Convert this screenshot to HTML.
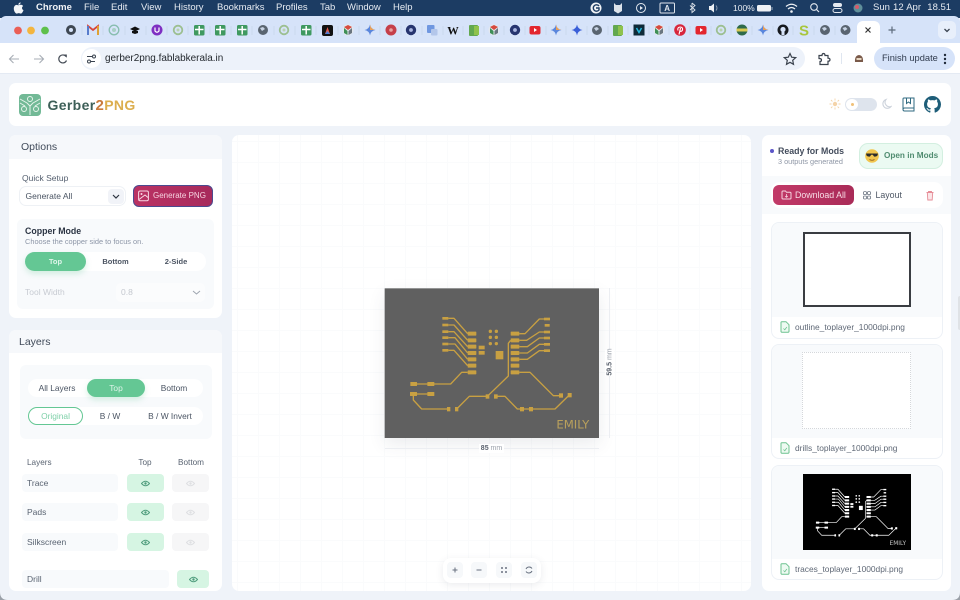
<!DOCTYPE html>
<html><head><meta charset="utf-8"><title>Gerber2PNG</title>
<style>
*{box-sizing:border-box}
html,body{margin:0;padding:0}
body{width:960px;height:600px;overflow:hidden;position:relative;background:#eff3f9;font-family:"Liberation Sans",sans-serif}
.a{position:absolute}
.t{position:absolute;white-space:nowrap;line-height:1}
.m{color:#e6ebf2;font-size:9.5px;top:3px}
.c{transform:translateX(-50%)}
.card{position:absolute;background:#fff;border-radius:7px}
.eye{position:absolute;border-radius:4px;display:flex;align-items:center;justify-content:center}
.lbl{position:absolute;background:#f8fafc;border-radius:4px;font-size:8.5px;color:#5a6472;padding-left:5px;line-height:18px;height:18px}
.fc{position:absolute;left:771px;width:172px;background:#fff;border:1px solid #edf1f6;border-radius:8px;overflow:hidden}
.fi{position:absolute;left:0;top:0;width:100%;height:94px;background:#f8fafc}
.fn{position:absolute;left:23px;font-size:8.4px;color:#5f6876;white-space:nowrap;line-height:1}
</style></head><body>

<!-- menubar -->
<div class="a" style="left:0;top:0;width:960px;height:18px;background:#1c3c63"></div>
<svg class="a" style="left:13px;top:2px" width="11" height="12" viewBox="0 0 11 12"><path d="M7.6 0.4C7.7 1.6 6.6 2.9 5.4 2.8 5.3 1.6 6.4 .5 7.6 .4ZM5.5 3.3C6.1 3.3 6.9 2.7 7.9 2.8 8.9 2.9 9.7 3.3 10.1 4.1 8.5 5 8.7 7.4 10.5 8.1 10 9.4 9 11.6 7.8 11.6 7 11.6 6.7 11.1 5.8 11.1 4.8 11.1 4.5 11.6 3.7 11.6 2.4 11.6.8 8.9.8 6.6.8 4.4 2.2 2.9 3.6 2.9 4.4 2.9 5 3.3 5.5 3.3Z" fill="#f4f6f9"/></svg>
<span class="t m" style="left:36px;font-weight:bold;color:#f2f4f8">Chrome</span>
<span class="t m" style="left:84px">File</span>
<span class="t m" style="left:111px">Edit</span>
<span class="t m" style="left:141px">View</span>
<span class="t m" style="left:174px">History</span>
<span class="t m" style="left:217px">Bookmarks</span>
<span class="t m" style="left:276px">Profiles</span>
<span class="t m" style="left:320px">Tab</span>
<span class="t m" style="left:347px">Window</span>
<span class="t m" style="left:393px">Help</span>

<svg class="a" style="left:590px;top:0" width="290" height="16" viewBox="590 0 290 16">
<circle cx="596" cy="8" r="5.5" fill="#f1f3f6"/><path d="M599 6A3.2 3.2 0 1 0 599 10V8H596" fill="none" stroke="#1c3c63" stroke-width="1.4"/>
<path d="M614 3L616 5H620L622 3V11L618 13.5 614 11Z" fill="#dbe2ea"/>
<circle cx="641" cy="8" r="4.5" fill="none" stroke="#e4e9f0"/><path d="M640 6L643 8 640 10Z" fill="#e4e9f0"/>
<rect x="660" y="3" width="14.5" height="10" rx="1" fill="none" stroke="#dfe5ec"/>
<text x="667.2" y="11" font-size="8" font-weight="bold" text-anchor="middle" fill="#dfe5ec">A</text>
<path d="M692 3L695 5.5 690 10M690 5.5L695 10 692 12.5V3" fill="none" stroke="#dfe5ec" stroke-width=".9"/>
<path d="M709 6H711L714 3.5V12.5L711 10H709Z" fill="#eef1f5"/><path d="M716 5.5Q718 8 716 10.5" fill="none" stroke="#8a9bb0"/>
<rect x="757" y="5" width="14" height="6.5" rx="1.5" fill="#eef1f5"/><rect x="771.5" y="7" width="1" height="3" fill="#9fb0c2"/>
<path d="M786 6.5Q791.5 2 797 6.5M788 9Q791.5 6 795 9" fill="none" stroke="#eef1f5" stroke-width="1.3"/><circle cx="791.5" cy="11.5" r="1.3" fill="#eef1f5"/>
<circle cx="814" cy="7" r="3.3" fill="none" stroke="#e4e9f0" stroke-width="1.1"/><path d="M816.5 9.5L819 12" stroke="#e4e9f0" stroke-width="1.2"/>
<rect x="833" y="3" width="9" height="4" rx="2" fill="#e4e9f0"/><rect x="833" y="8.5" width="9" height="4" rx="2" fill="none" stroke="#e4e9f0"/>
<circle cx="858" cy="8" r="4.5" fill="#5f8f9a"/><circle cx="857" cy="7" r="2" fill="#d75a6a"/>
</svg>
<span class="t" style="left:733px;top:4px;font-size:8.5px;color:#e6ebf2">100%</span>
<span class="t" style="left:873px;top:3px;font-size:9.5px;color:#e6ebf2;word-spacing:.5px">Sun 12 Apr&nbsp; 18.51</span>

<!-- tab bar -->
<div class="a" style="left:0;top:16px;width:960px;height:28px;background:#d6e3f9;border-radius:6px 6px 0 0"></div>
<div class="a" style="left:857px;top:21px;width:23px;height:23px;background:#fff;border-radius:6px 6px 0 0"></div>
<div class="a" style="left:938px;top:21px;width:18px;height:18px;background:#e8effb;border-radius:5px"></div>
<svg class="a" style="left:0;top:16px" width="960" height="28" viewBox="0 16 960 28">
<circle cx="18" cy="30.5" r="3.9" fill="#ea5f56"/><circle cx="31" cy="30.5" r="3.9" fill="#f3b53f"/><circle cx="45" cy="30.5" r="3.9" fill="#5ec04b"/>
<g stroke="#c8d5ea" stroke-width=".8"><path d="M82 26V35M103 26V35M125 26V35M146 26V35M167 26V35M188 26V35M210 26V35M231 26V35M252 26V35M274 26V35M295 26V35M316 26V35M338 26V35M359 26V35M380 26V35M401 26V35M422 26V35M443 26V35M463 26V35M484 26V35M504 26V35M525 26V35M546 26V35M566 26V35M587 26V35M608 26V35M628 26V35M649 26V35M669 26V35M690 26V35M711 26V35M731 26V35M752 26V35M773 26V35M793 26V35M814 26V35M835 26V35"/></g>
<circle cx="71" cy="30" r="5" fill="#3f4853"/><circle cx="71" cy="30" r="2" fill="#d6e3f9"/>
<path d="M88 35V26L93 30 98 26V35" fill="none" stroke="#d8453a" stroke-width="1.8"/><path d="M88 35V26" stroke="#4a7fd8" stroke-width="1.8"/><path d="M98 35V26" stroke="#e0a830" stroke-width="1.8"/>
<circle cx="114" cy="30" r="4.8" fill="none" stroke="#88bdaf" stroke-width="1.3"/><circle cx="114" cy="30" r="2" fill="#a8d0c4"/>
<path d="M130 29L135 26.5 140 29 135 31.5Z" fill="#111"/><path d="M132 31V33L135 34 138 33V31" fill="#111"/>
<circle cx="157" cy="30" r="5.5" fill="#7e2fc2"/><path d="M155 27.5V31Q157 33.5 159 31V27.5" fill="none" stroke="#fff" stroke-width="1.2"/>
<circle cx="178" cy="30" r="4.3" fill="none" stroke="#9cbf90" stroke-width="1.8"/><circle cx="178" cy="30" r="1.5" fill="#b8d2ae"/>
<rect x="194" y="25" width="10.5" height="10.5" rx="1.5" fill="#3f9960"/><path d="M199.2 26V34.5M195 29.5H203.5" stroke="#fff" stroke-width="1.5"/>
<rect x="215" y="25" width="10.5" height="10.5" rx="1.5" fill="#3f9960"/><path d="M220.2 26V34.5M216 29.5H224.5" stroke="#fff" stroke-width="1.5"/>
<rect x="237" y="25" width="10.5" height="10.5" rx="1.5" fill="#3f9960"/><path d="M242.2 26V34.5M238 29.5H246.5" stroke="#fff" stroke-width="1.5"/>
<circle cx="263" cy="30" r="5" fill="#596470"/><path d="M260 28L263 27 265 29 262 31Z" fill="#c7d3e4"/>
<circle cx="284" cy="30" r="4.3" fill="none" stroke="#9cbf90" stroke-width="1.8"/><circle cx="284" cy="30" r="1.5" fill="#b8d2ae"/>
<rect x="301" y="25" width="10.5" height="10.5" rx="1.5" fill="#3f9960"/><path d="M306.2 26V34.5M302 29.5H310.5" stroke="#fff" stroke-width="1.5"/>
<rect x="322" y="25" width="11" height="11" rx="2" fill="#111"/><path d="M325 34L327.5 27 330 34Z" fill="#e0584a"/><path d="M327.5 31L330 34H325Z" fill="#4a7fd8"/>
<circle cx="348" cy="30" r="5.5" fill="#e3e8ee"/><path d="M344 27L348 25 352 27 348 30Z" fill="#d64a3d"/><path d="M344 28V33L347.5 35V31Z" fill="#3f8f57"/><path d="M352 28V33L348.5 35V31Z" fill="#6a7680"/>
<path d="M370 24.5Q370.8 29.2 375.5 30 370.8 30.8 370 35.5 369.2 30.8 364.5 30 369.2 29.2 370 24.5Z" fill="#5a86dc"/><path d="M370 24.5Q370.8 29.2 375.5 30H370Z" fill="#e8a05a"/>
<circle cx="391" cy="30" r="5.5" fill="#c53f4a"/><circle cx="391" cy="30" r="1.8" fill="#e8a0a0"/>
<circle cx="411" cy="30" r="5.2" fill="#27356f"/><circle cx="411" cy="30" r="1.9" fill="#aab6e0"/>
<rect x="427" y="25" width="7.5" height="8" rx="1" fill="#6f97e0"/><rect x="431" y="29" width="6.5" height="6.5" rx="1" fill="#b3c6ea"/>
<rect x="469" y="25" width="9" height="11" rx="1" fill="#62a84f"/><rect x="474" y="26" width="5" height="9" fill="#8fc24c"/>
<text x="453" y="34.5" font-family="Liberation Serif,serif" font-size="11.5" font-weight="bold" text-anchor="middle" fill="#111">W</text>
<circle cx="494" cy="30" r="5.5" fill="#e3e8ee"/><path d="M490 27L494 25 498 27 494 30Z" fill="#d64a3d"/><path d="M490 28V33L493.5 35V31Z" fill="#3f8f57"/><path d="M498 28V33L494.5 35V31Z" fill="#6a7680"/>
<circle cx="515" cy="30" r="5.2" fill="#27356f"/><circle cx="515" cy="30" r="1.9" fill="#aab6e0"/>
<rect x="529.5" y="26" width="11" height="8.5" rx="2" fill="#e3262e"/><path d="M534 28L537 30 534 32Z" fill="#fff"/>
<path d="M556 24.5Q556.8 29.2 561.5 30 556.8 30.8 556 35.5 555.2 30.8 550.5 30 555.2 29.2 556 24.5Z" fill="#5a86dc"/><path d="M556 24.5Q556.8 29.2 561.5 30H556Z" fill="#e8a05a"/>
<path d="M577 24.5Q577.8 29.2 582.5 30 577.8 30.8 577 35.5 576.2 30.8 571.5 30 576.2 29.2 577 24.5Z" fill="#3a5fd8"/>
<circle cx="597" cy="30" r="5" fill="#596470"/><path d="M594 28L597 27 599 29 596 31Z" fill="#c7d3e4"/>
<rect x="613" y="25" width="9" height="11" rx="1" fill="#62a84f"/><rect x="618" y="26" width="5" height="9" fill="#8fc24c"/>
<rect x="633.5" y="24.5" width="11" height="11" fill="#0e2a38"/><path d="M636.5 28L639 32.5 641.5 28" fill="none" stroke="#25b7dc" stroke-width="1.5"/>
<circle cx="659" cy="30" r="5.5" fill="#e3e8ee"/><path d="M655 27L659 25 663 27 659 30Z" fill="#d64a3d"/><path d="M655 28V33L658.5 35V31Z" fill="#3f8f57"/><path d="M663 28V33L659.5 35V31Z" fill="#6a7680"/>
<circle cx="680" cy="30" r="5.8" fill="#d8263c"/><path d="M679 34.5L680.5 28M678 30.5Q677 27.5 680 27 683 27 682.5 30 681.5 32 680 31" fill="none" stroke="#fff" stroke-width="1.1"/>
<rect x="695.5" y="26" width="11" height="8.5" rx="2" fill="#e3262e"/><path d="M700 28L703 30 700 32Z" fill="#fff"/>
<circle cx="721" cy="30" r="4.3" fill="none" stroke="#9cbf90" stroke-width="1.8"/><circle cx="721" cy="30" r="1.5" fill="#b8d2ae"/>
<circle cx="742" cy="30" r="5.5" fill="#2e6a4a"/><rect x="736.5" y="28.5" width="11" height="3" fill="#d8c850"/>
<path d="M763 24.5Q763.8 29.2 768.5 30 763.8 30.8 763 35.5 762.2 30.8 757.5 30 762.2 29.2 763 24.5Z" fill="#5a86dc"/><path d="M763 24.5Q763.8 29.2 768.5 30H763Z" fill="#e8a05a"/>
<circle cx="783" cy="30" r="5.5" fill="#15191e"/><circle cx="783" cy="29.5" r="2.6" fill="#d6e3f9"/><rect x="781.5" y="32" width="3" height="3" fill="#d6e3f9"/>
<text x="804" y="35.5" font-size="15" font-weight="bold" text-anchor="middle" fill="#a8c63f">S</text>
<circle cx="825" cy="30" r="5" fill="#596470"/><path d="M822 28L825 27 827 29 824 31Z" fill="#c7d3e4"/>
<circle cx="845.5" cy="30" r="5" fill="#596470"/><path d="M842.5 28L845.5 27 847.5 29 844.5 31Z" fill="#c7d3e4"/>
<path d="M865.5 27.5L870.5 32.5M870.5 27.5L865.5 32.5" stroke="#333" stroke-width="1.2"/>
<path d="M892 26.5V33.5M888.5 30H895.5" stroke="#5d6b7c" stroke-width="1.2"/>
<path d="M944.5 29L947 31.5 949.5 29" fill="none" stroke="#3a4350" stroke-width="1.3"/>
</svg>

<!-- toolbar -->
<div class="a" style="left:0;top:43px;width:960px;height:31px;background:#fff;border-bottom:1px solid #e4eaf3"></div>
<svg class="a" style="left:0;top:44px" width="80" height="30" viewBox="0 44 80 30">
<path d="M19 59H10M13.5 55L9.5 59 13.5 63" fill="none" stroke="#a7adb5" stroke-width="1.1"/>
<path d="M34 59H43M39.5 55L43.5 59 39.5 63" fill="none" stroke="#a7adb5" stroke-width="1.1"/>
<path d="M66 56.5A4 4 0 1 0 66.5 60.5" fill="none" stroke="#444b55" stroke-width="1.2"/><path d="M63.5 54.5L66.8 54.5 66.8 57.8Z" fill="#444b55"/>
</svg>
<div class="a" style="left:81px;top:47px;width:724px;height:23px;background:#edf2fa;border-radius:12px"></div>
<div class="a" style="left:82px;top:49px;width:19px;height:19px;background:#fff;border-radius:50%"></div>
<svg class="a" style="left:86px;top:54px" width="11" height="10" viewBox="0 0 11 10"><path d="M1 2.5H6M9 7.5H5" stroke="#3a434f" stroke-width="1"/><circle cx="8" cy="2.5" r="1.5" fill="none" stroke="#3a434f"/><circle cx="3" cy="7.5" r="1.5" fill="none" stroke="#3a434f"/></svg>
<span class="t" style="left:105px;top:54px;font-size:9.95px;color:#23282e">gerber2png.fablabkerala.in</span>
<svg class="a" style="left:783px;top:52px" width="14" height="14" viewBox="0 0 14 14"><path d="M7 1.5L8.7 5.2 12.7 5.6 9.7 8.3 10.5 12.3 7 10.3 3.500 12.3 4.3 8.3 1.3 5.6 5.3 5.2Z" fill="none" stroke="#3b434e" stroke-width="1.2"/></svg>
<svg class="a" style="left:817px;top:52px" width="14" height="14" viewBox="0 0 14 14"><path d="M2 3.5H5Q5 1.5 6.5 1.5 8 1.5 8 3.5H11V6.2Q13 6.2 13 7.7 13 9.2 11 9.2V12.5H3V9.5Q4.5 9.5 4.5 8 4.5 6.5 2 6.5Z" fill="none" stroke="#3b434e" stroke-width="1.2"/></svg>
<div class="a" style="left:841px;top:53px;width:1px;height:11px;background:#dfe6f0"></div>
<svg class="a" style="left:854px;top:54px" width="10" height="9" viewBox="0 0 10 9"><path d="M1 8Q.5 1.5 5 1 9.5 1.5 9 8Z" fill="#7a5a4a"/><rect x="2.5" y="4" width="5" height="2" fill="#e5d5c0"/></svg>
<div class="a" style="left:874px;top:47px;width:81px;height:23px;background:#d6e3f9;border-radius:12px"></div>
<span class="t" style="left:882px;top:54px;font-size:9.3px;color:#2f3a4d">Finish update</span>
<svg class="a" style="left:943px;top:52px" width="4" height="14"><circle cx="2" cy="3" r="1.2" fill="#1f2a3a"/><circle cx="2" cy="7" r="1.2" fill="#1f2a3a"/><circle cx="2" cy="11" r="1.2" fill="#1f2a3a"/></svg>

<!-- header card -->
<div class="card" style="left:9px;top:83px;width:942px;height:43px"></div>
<svg class="a" style="left:19px;top:94px" width="22" height="22" viewBox="0 0 22 22">
<rect width="22" height="22" rx="4" fill="#72b996"/>
<g fill="none" stroke="#e7f4ec" stroke-width="1"><path d="M11 21V11M1 5L8 9 11 12 14 9 21 5M1 9L6 12M21 9L16 12"/><circle cx="11" cy="5" r="2.5"/><circle cx="5" cy="15" r="2.5"/><circle cx="17" cy="15" r="2.5"/></g>
</svg>
<div class="t" style="left:47.5px;top:98px;font-size:14px;font-weight:bold;letter-spacing:.35px;color:#3d5f58">Gerber<span style="color:#c97b3c;font-size:15px">2</span><span style="color:#dcae4e">PNG</span></div>
<svg class="a" style="left:829px;top:98px" width="12" height="12" viewBox="0 0 12 12"><circle cx="6" cy="6" r="2.2" fill="#f4d3a8"/><path d="M6 .5V2.5M6 9.5V11.5M.5 6H2.5M9.5 6H11.5M2 2L3.4 3.4M8.6 8.6L10 10M2 10L3.4 8.6M8.6 3.4L10 2" stroke="#f4d3a8" stroke-width=".9"/></svg>
<div class="a" style="left:845px;top:98px;width:32px;height:13px;background:#dee4ed;border-radius:7px"></div>
<div class="a" style="left:846px;top:99px;width:12px;height:11px;background:#fff;border-radius:50%"></div>
<div class="a" style="left:851px;top:103px;width:3px;height:3px;background:#f0c078;border-radius:50%"></div>
<svg class="a" style="left:882px;top:98px" width="10" height="12" viewBox="0 0 10 12"><path d="M4 1.5A4.500 4.500 0 1 0 9 8.500 4.500 4.500 0 0 1 4 1.5Z" fill="none" stroke="#ccd2db" stroke-width="1.1"/></svg>
<svg class="a" style="left:902px;top:97px" width="13" height="15" viewBox="0 0 13 15"><path d="M1 12.5V2Q1 1 2 1H12V14H2.5Q1 14 1 12.5 1 11 2.5 11H12" fill="none" stroke="#2f6a80" stroke-width="1"/><path d="M4.5 1V6.5L6.5 5 8.5 6.5V1" fill="none" stroke="#2f6a80" stroke-width="1"/></svg>
<svg class="a" style="left:924px;top:96px" width="17" height="17" viewBox="0 0 16 16"><path fill="#1d5d78" d="M8 0C3.580 0 0 3.580 0 8c0 3.540 2.290 6.530 5.470 7.590.4.070.55-.17.55-.38 0-.19-.01-.82-.01-1.490-2.010.37-2.530-.49-2.690-.94-.09-.23-.48-.94-.82-1.130-.28-.15-.68-.52-.01-.53.630-.01 1.080.58 1.230.82.720 1.210 1.870.87 2.330.66.070-.52.280-.87.510-1.070-1.780-.2-3.640-.89-3.640-3.950 0-.87.310-1.590.820-2.150-.08-.2-.36-1.020.08-2.120 0 0 .67-.21 2.200.82.640-.18 1.320-.27 2-.27s1.360.09 2 .27c1.530-1.040 2.200-.82 2.200-.82.440 1.100.16 1.920.08 2.120.51.560.82 1.270.82 2.150 0 3.070-1.870 3.750-3.650 3.950.29.250.54.730.54 1.480 0 1.070-.01 1.930-.01 2.200 0 .21.150.46.550.38A8.010 8.010 0 0 0 16 8c0-4.420-3.580-8-8-8z"/></svg>

<!-- options card -->
<div class="card" style="left:9px;top:135px;width:213px;height:183px;overflow:hidden"><div class="a" style="left:0;top:0;width:100%;height:24px;background:#f6f8fb"></div></div>
<span class="t" style="left:21px;top:142px;font-size:10.5px;color:#414b5a">Options</span>
<span class="t" style="left:22px;top:174px;font-size:8.5px;color:#556070">Quick Setup</span>
<div class="a" style="left:19px;top:186px;width:107px;height:20px;background:#fff;border:1px solid #eef1f5;border-radius:7px"></div>
<span class="t" style="left:25.5px;top:191.5px;font-size:8.5px;color:#4a5463">Generate All</span>
<div class="a" style="left:108px;top:189px;width:16px;height:15px;background:#f1f3f8;border-radius:4px"></div>
<svg class="a" style="left:112px;top:193px" width="8" height="7"><path d="M1 2L4 5 7 2" fill="none" stroke="#2d3440" stroke-width="1.2"/></svg>
<div class="a" style="left:133px;top:185px;width:80px;height:22px;background:linear-gradient(90deg,#ba3263,#a72a5c);border:1.5px solid #4b4a8f;border-radius:6px"></div>
<svg class="a" style="left:138px;top:190px" width="11" height="12" viewBox="0 0 11 12"><rect x=".6" y="1" width="9.8" height="9.8" rx="1.5" fill="none" stroke="#f8d8e4" stroke-width="1"/><circle cx="3.5" cy="4" r="1" fill="#f8d8e4"/><path d="M1 9.5L7 5 10 7.5" fill="none" stroke="#f8d8e4"/></svg>
<span class="t" style="left:153px;top:192px;font-size:8px;color:#f6d3e0">Generate PNG</span>

<div class="a" style="left:17px;top:219px;width:197px;height:90px;background:#f8fafc;border-radius:6px"></div>
<span class="t" style="left:25px;top:227px;font-size:8.8px;font-weight:bold;color:#2b3443">Copper Mode</span>
<span class="t" style="left:25px;top:238px;font-size:7.4px;color:#8d96a7">Choose the copper side to focus on.</span>
<div class="a" style="left:25px;top:252px;width:181px;height:19px;background:#fff;border-radius:10px"></div>
<div class="a" style="left:25px;top:252px;width:61px;height:19px;background:#64c794;border-radius:10px;box-shadow:0 3px 6px rgba(100,199,148,.25)"></div>
<span class="t c" style="left:55.5px;top:258px;font-size:7.5px;font-weight:bold;color:#dff5ea">Top</span>
<span class="t c" style="left:115.5px;top:258px;font-size:7.5px;font-weight:bold;color:#4c5563">Bottom</span>
<span class="t c" style="left:176px;top:258px;font-size:7.5px;font-weight:bold;color:#4c5563">2-Side</span>
<span class="t" style="left:25px;top:288px;font-size:8.5px;color:#c8ccd3">Tool Width</span>
<div class="a" style="left:116px;top:283px;width:89px;height:19px;background:#fbfcfd;border-radius:5px"></div>
<span class="t" style="left:121px;top:288px;font-size:8.5px;color:#c4c8cf">0.8</span>
<svg class="a" style="left:192px;top:289px" width="9" height="7"><path d="M1 2L4.5 5 8 2" fill="none" stroke="#9da4af" stroke-width="1"/></svg>

<!-- layers card -->
<div class="card" style="left:9px;top:330px;width:213px;height:261px;overflow:hidden"><div class="a" style="left:0;top:0;width:100%;height:23px;background:#f6f8fb"></div></div>
<span class="t" style="left:19px;top:337px;font-size:10.5px;color:#414b5a">Layers</span>
<div class="a" style="left:20px;top:365px;width:192px;height:74px;background:#f8fafc;border-radius:6px"></div>
<div class="a" style="left:28px;top:379px;width:175px;height:18px;background:#fff;border-radius:9px"></div>
<div class="a" style="left:87px;top:379px;width:58px;height:18px;background:#64c794;border-radius:9px;box-shadow:0 3px 6px rgba(100,199,148,.25)"></div>
<span class="t c" style="left:57px;top:384px;font-size:8.4px;color:#4a5463">All Layers</span>
<span class="t c" style="left:116px;top:384px;font-size:8.4px;color:#dff5ea">Top</span>
<span class="t c" style="left:174px;top:384px;font-size:8.4px;color:#4a5463">Bottom</span>
<div class="a" style="left:28px;top:407px;width:175px;height:18px;background:#fff;border-radius:9px"></div>
<div class="a" style="left:28px;top:407px;width:55px;height:18px;background:#fff;border:1px solid #64c794;border-radius:9px"></div>
<span class="t c" style="left:55.5px;top:412px;font-size:8.4px;color:#7ed0a8">Original</span>
<span class="t c" style="left:110px;top:412px;font-size:8.4px;color:#4a5463">B / W</span>
<span class="t c" style="left:170px;top:412px;font-size:8.4px;color:#4a5463">B / W Invert</span>
<span class="t" style="left:27px;top:459px;font-size:8.2px;color:#5a6472">Layers</span>
<span class="t c" style="left:145px;top:459px;font-size:8.2px;color:#5a6472">Top</span>
<span class="t c" style="left:191px;top:459px;font-size:8.2px;color:#5a6472">Bottom</span>

<div class="lbl" style="left:22px;top:474px;width:96px">Trace</div>
<div class="lbl" style="left:22px;top:503px;width:96px">Pads</div>
<div class="lbl" style="left:22px;top:533px;width:96px">Silkscreen</div>
<div class="lbl" style="left:22px;top:570px;width:147px">Drill</div>

<div class="eye" style="left:127px;top:474px;width:37px;height:18px;background:#d6f5e3"><svg width="9" height="7" viewBox="0 0 9 7"><path d="M.5 3.5Q4.5-1 8.5 3.5 4.5 8 .5 3.5Z" fill="none" stroke="#4e9c7c"/><circle cx="4.5" cy="3.5" r="1.2" fill="#4e9c7c"/></svg></div>
<div class="eye" style="left:127px;top:503px;width:37px;height:18px;background:#d6f5e3"><svg width="9" height="7" viewBox="0 0 9 7"><path d="M.5 3.5Q4.5-1 8.5 3.5 4.5 8 .5 3.5Z" fill="none" stroke="#4e9c7c"/><circle cx="4.5" cy="3.5" r="1.2" fill="#4e9c7c"/></svg></div>
<div class="eye" style="left:127px;top:533px;width:37px;height:18px;background:#d6f5e3"><svg width="9" height="7" viewBox="0 0 9 7"><path d="M.5 3.5Q4.5-1 8.5 3.5 4.5 8 .5 3.5Z" fill="none" stroke="#4e9c7c"/><circle cx="4.5" cy="3.5" r="1.2" fill="#4e9c7c"/></svg></div>
<div class="eye" style="left:177px;top:570px;width:32px;height:18px;background:#d6f5e3"><svg width="9" height="7" viewBox="0 0 9 7"><path d="M.5 3.5Q4.5-1 8.5 3.5 4.5 8 .5 3.5Z" fill="none" stroke="#4e9c7c"/><circle cx="4.5" cy="3.5" r="1.2" fill="#4e9c7c"/></svg></div>
<div class="eye" style="left:172px;top:474px;width:37px;height:18px;background:#f6f6f7"><svg width="9" height="7" viewBox="0 0 9 7"><path d="M.5 3.5Q4.5-1 8.5 3.5 4.5 8 .5 3.5Z" fill="none" stroke="#dedfe2"/><circle cx="4.5" cy="3.5" r="1.2" fill="#dedfe2"/></svg></div>
<div class="eye" style="left:172px;top:503px;width:37px;height:18px;background:#f6f6f7"><svg width="9" height="7" viewBox="0 0 9 7"><path d="M.5 3.5Q4.5-1 8.5 3.5 4.5 8 .5 3.5Z" fill="none" stroke="#dedfe2"/><circle cx="4.5" cy="3.5" r="1.2" fill="#dedfe2"/></svg></div>
<div class="eye" style="left:172px;top:533px;width:37px;height:18px;background:#f6f6f7"><svg width="9" height="7" viewBox="0 0 9 7"><path d="M.5 3.5Q4.5-1 8.5 3.5 4.5 8 .5 3.5Z" fill="none" stroke="#dedfe2"/><circle cx="4.5" cy="3.5" r="1.2" fill="#dedfe2"/></svg></div>

<!-- center -->
<div class="card" style="left:232px;top:135px;width:519px;height:456px;background-color:#fff;background-image:linear-gradient(#fafbfc 1px,transparent 1px),linear-gradient(90deg,#fafbfc 1px,transparent 1px);background-size:21px 21px;background-position:5px 6px"></div>
<div class="a" style="left:385px;top:288px;width:214px;height:150px;box-shadow:0 6px 16px rgba(60,70,90,.10)"></div>
<svg class="a" style="left:380px;top:280px" width="240" height="180" viewBox="0 0 720 540">
<defs><g id="tr">
<g fill="none" stroke-width="4" stroke-linejoin="round">
<path d="M205 115H222L263 161M205 135H222L263 181M205 155H222L263 200M205 173H225L263 219M205 192H225L263 238M205 211H222L263 257"/>
<path d="M263 277H245L212 312H105M100 342H155M100 345V360L125 387H205M230 387L268 349H322L385 288V190L392 181"/>
<path d="M347 349H375L412 387H525L568 345"/>
<path d="M418 161H435L478 117H492M418 181H440L478 156H492M418 200H442L478 174H492M418 219H442L478 193H492M418 238H442L478 212H492M418 277H450L520 347H543"/>
</g>
<g stroke="none">
<rect x="187" y="111" width="18" height="8"/><rect x="187" y="131" width="18" height="8"/><rect x="187" y="151" width="18" height="8"/><rect x="187" y="169" width="18" height="8"/><rect x="187" y="188" width="18" height="8"/><rect x="187" y="207" width="18" height="8"/>
<rect x="492" y="113" width="18" height="8"/><rect x="494" y="132" width="15" height="8"/><rect x="492" y="152" width="18" height="8"/><rect x="492" y="170" width="18" height="8"/><rect x="492" y="189" width="18" height="8"/><rect x="492" y="208" width="18" height="8"/>
<rect x="263" y="155" width="26" height="12" rx="2"/><rect x="263" y="175" width="26" height="12" rx="2"/><rect x="263" y="194" width="26" height="12" rx="2"/><rect x="263" y="213" width="26" height="12" rx="2"/><rect x="263" y="232" width="26" height="12" rx="2"/><rect x="263" y="251" width="26" height="12" rx="2"/><rect x="263" y="271" width="26" height="12" rx="2"/>
<rect x="392" y="155" width="26" height="12" rx="2"/><rect x="392" y="175" width="26" height="12" rx="2"/><rect x="392" y="194" width="26" height="12" rx="2"/><rect x="392" y="213" width="26" height="12" rx="2"/><rect x="392" y="232" width="26" height="12" rx="2"/><rect x="392" y="251" width="26" height="12" rx="2"/><rect x="392" y="271" width="26" height="12" rx="2"/>
<rect x="296" y="197" width="18" height="11"/><rect x="296" y="213" width="18" height="11"/><rect x="347" y="213" width="23" height="25"/>
<circle cx="331" cy="154" r="5"/><circle cx="349" cy="154" r="5"/><circle cx="331" cy="172" r="5"/><circle cx="349" cy="172" r="5"/><circle cx="331" cy="191" r="5"/><circle cx="349" cy="191" r="5"/>
<rect x="91" y="306" width="20" height="12" rx="1"/><rect x="142" y="306" width="21" height="12" rx="1"/><rect x="90" y="336" width="21" height="12" rx="1"/><rect x="142" y="336" width="21" height="12" rx="1"/>
<rect x="201" y="381" width="10" height="13"/><rect x="225" y="381" width="10" height="13"/><rect x="317" y="343" width="11" height="13"/><rect x="342" y="343" width="11" height="13"/><rect x="420" y="381" width="12" height="13"/><rect x="447" y="381" width="12" height="13"/><rect x="537" y="340" width="12" height="13"/><rect x="563" y="339" width="12" height="13"/>
</g></g></defs>
<rect x="14" y="25" width="643" height="449" fill="#606060"/>
<use href="#tr" fill="#c8a042" stroke="#c8a042"/>
<text x="529" y="445" font-family="DejaVu Sans,sans-serif" font-size="35" fill="#b9a05c" textLength="99" lengthAdjust="spacingAndGlyphs">EMILY</text>
</svg>
<div class="a" style="left:609px;top:288px;width:1px;height:150px;background:#eceef2"></div>
<div class="a" style="left:385px;top:448px;width:214px;height:1px;background:#eceef2"></div>
<div class="a" style="left:479px;top:444px;width:25px;height:9px;background:#fff"></div>
<span class="t c" style="left:491.5px;top:445px;font-size:7px;color:#9aa0aa"><b style="color:#59606c">85</b> mm</span>
<div class="a" style="left:605px;top:350px;width:9px;height:26px;background:#fff"></div>
<span class="t" style="left:610px;top:362px;font-size:7px;color:#9aa0aa;transform:translate(-50%,-50%) rotate(-90deg)"><b style="color:#59606c">59.5</b> mm</span>

<div class="a" style="left:443px;top:558px;width:98px;height:25px;background:#fff;border-radius:8px;box-shadow:0 2px 8px rgba(60,70,90,.10)"></div>
<svg class="a" style="left:443px;top:558px" width="98" height="25" viewBox="443 558 98 25">
<rect x="447" y="562" width="16" height="16" rx="4" fill="#f6f8fa"/><rect x="471" y="562" width="16" height="16" rx="4" fill="#f6f8fa"/><rect x="496" y="562" width="16" height="16" rx="4" fill="#f6f8fa"/><rect x="521" y="562" width="16" height="16" rx="4" fill="#f6f8fa"/>
<path d="M455 567.5V572.5M452.5 570H457.5M476.5 570H481.5" stroke="#687180" stroke-width="1"/>
<path d="M501 568H503M505 568H507M501 572H503M505 572H507" stroke="#687180" stroke-width="1.5"/>
<path d="M532 568.5A3.5 3.5 0 0 0 526 569M526 571.5A3.5 3.5 0 0 0 532 571" fill="none" stroke="#687180" stroke-width="1"/>
</svg>

<!-- right panel -->
<div class="card" style="left:762px;top:135px;width:189px;height:456px"></div>
<div class="a" style="left:762px;top:176px;width:189px;height:38px;background:#f8fafc"></div>
<div class="a" style="left:770px;top:149px;width:4px;height:4px;background:#5c56c8;border-radius:50%"></div>
<span class="t" style="left:778px;top:147px;font-size:8.8px;font-weight:bold;color:#434c5c">Ready for Mods</span>
<span class="t" style="left:778px;top:158px;font-size:7.3px;color:#8f97a6">3 outputs generated</span>
<div class="a" style="left:859px;top:143px;width:84px;height:26px;background:#ebfaf2;border:1px solid #d3efe0;border-radius:9px"></div>
<svg class="a" style="left:865px;top:149px" width="14" height="14" viewBox="0 0 14 14"><circle cx="7" cy="7" r="6.8" fill="#f2c64e"/><path d="M1 4.5H13L12.5 6.5Q11 8 9 7.5L7.8 5.8H6.2L5 7.5Q3 8 1.5 6.5Z" fill="#2b2b2b"/><path d="M4.5 10.5Q7 12 9.5 10.5" fill="none" stroke="#8a5a20" stroke-width=".8"/></svg>
<span class="t" style="left:884px;top:152px;font-size:8.2px;font-weight:bold;color:#508c70">Open in Mods</span>

<div class="a" style="left:771px;top:182px;width:172px;height:26px;background:#fff;border-radius:9px"></div>
<div class="a" style="left:773px;top:185px;width:81px;height:20px;background:linear-gradient(90deg,#c23a68,#a92b58);border-radius:6px"></div>
<svg class="a" style="left:781px;top:190px" width="11" height="10" viewBox="0 0 11 10"><path d="M1 2Q1 1 2 1H4.5L5.5 2.3H9Q10 2.3 10 3.3V8Q10 9 9 9H2Q1 9 1 8Z" fill="none" stroke="#f6d3e0"/><path d="M5.5 4V7M4.2 6L5.5 7.3 6.8 6" fill="none" stroke="#f6d3e0" stroke-width=".8"/></svg>
<span class="t" style="left:795px;top:191px;font-size:8.8px;color:#f8dce6">Download All</span>
<svg class="a" style="left:863px;top:191px" width="8" height="9" viewBox="0 0 8 9"><g fill="none" stroke="#6b7482" stroke-width=".8"><rect x=".5" y=".6" width="3" height="3" rx="1"/><rect x="4.5" y=".6" width="3" height="3" rx="1"/><rect x=".5" y="5" width="3" height="3" rx="1"/><rect x="4.5" y="5" width="3" height="3" rx="1"/></g></svg>
<span class="t" style="left:875.5px;top:191px;font-size:8.8px;color:#4f5866">Layout</span>
<svg class="a" style="left:925px;top:190px" width="10" height="11" viewBox="0 0 10 11"><path d="M1.5 2.5H8.5M3.5 2.5V1.5H6.5V2.5M2.3 2.5L2.8 10H7.2L7.7 2.5" fill="#fbe6e8" stroke="#e68d97" stroke-width=".9"/></svg>

<div class="fc" style="top:222px;height:117px"><div class="fi"></div>
<div class="a" style="left:31px;top:9px;width:108px;height:75px;background:#fff;border:2px solid #3a3d42"></div>
<svg class="a" style="left:8px;top:98px" width="10" height="12" viewBox="0 0 10 12"><path d="M1 1.5Q1 .7 1.8.7H6L9 3.7V10.3Q9 11.2 8.2 11.2H1.8Q1 11.2 1 10.3Z" fill="#eefaf2" stroke="#6cc28f"/><path d="M3.5 7.5L4.8 8.8 6.8 6" fill="none" stroke="#6cc28f" stroke-width=".8"/></svg>
<span class="fn" style="top:100px">outline_toplayer_1000dpi.png</span></div>

<div class="fc" style="top:344px;height:115px"><div class="fi" style="height:93px"></div>
<div class="a" style="left:30px;top:7px;width:109px;height:77px;background:#fff;border:1px dotted #d4d7db"></div>
<svg class="a" style="left:8px;top:97px" width="10" height="12" viewBox="0 0 10 12"><path d="M1 1.5Q1 .7 1.8.7H6L9 3.7V10.3Q9 11.2 8.2 11.2H1.8Q1 11.2 1 10.3Z" fill="#eefaf2" stroke="#6cc28f"/><path d="M3.5 7.5L4.8 8.8 6.8 6" fill="none" stroke="#6cc28f" stroke-width=".8"/></svg>
<span class="fn" style="top:99px">drills_toplayer_1000dpi.png</span></div>

<div class="fc" style="top:465px;height:115px"><div class="fi" style="height:93px"></div>
<svg class="a" style="left:31px;top:8px" width="108" height="76" viewBox="14 25 643 449" preserveAspectRatio="none"><rect x="14" y="25" width="643" height="449" fill="#000"/><use href="#tr" fill="#fff" stroke="#fff"/><text x="529" y="445" font-family="DejaVu Sans,sans-serif" font-size="35" fill="#c4c4c4" textLength="99" lengthAdjust="spacingAndGlyphs">EMILY</text></svg>
<svg class="a" style="left:8px;top:97px" width="10" height="12" viewBox="0 0 10 12"><path d="M1 1.5Q1 .7 1.8.7H6L9 3.7V10.3Q9 11.2 8.2 11.2H1.8Q1 11.2 1 10.3Z" fill="#eefaf2" stroke="#6cc28f"/><path d="M3.5 7.5L4.8 8.8 6.8 6" fill="none" stroke="#6cc28f" stroke-width=".8"/></svg>
<span class="fn" style="top:99px">traces_toplayer_1000dpi.png</span></div>

<!-- window edge details -->
<div class="a" style="left:958px;top:296px;width:2px;height:34px;background:#dfe2e6;border-radius:2px 0 0 2px"></div>
<svg class="a" style="left:0;top:592px" width="8" height="8"><path d="M0 0V8H8Q0 8 0 0Z" fill="#9aa0a8"/></svg>
<svg class="a" style="left:952px;top:592px" width="8" height="8"><path d="M8 0V8H0Q8 8 8 0Z" fill="#9aa0a8"/></svg>
</body></html>
